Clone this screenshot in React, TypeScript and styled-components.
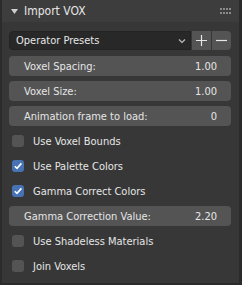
import styled, { createGlobalStyle } from "styled-components";

const GlobalStyle = createGlobalStyle`
  html, body {
    margin: 0;
    padding: 0;
    background: #2b2b2b;
  }
  body {
    font-family: "DejaVu Sans Condensed", "Liberation Sans", sans-serif;
    font-size: 11px;
    color: #e6e6e6;
  }
`;

const Page = styled.div`
  width: 242px;
  height: 285px;
  padding: 0 3px 0 2px;
  box-sizing: border-box;
  background: #2b2b2b;
`;

const Panel = styled.section`
  background: #373737;
  padding-bottom: 7px;
`;

const Header = styled.header`
  height: 22px;
  display: flex;
  align-items: center;
  background: #3d3d3d;
  padding: 0 8px 0 9px;
`;

const Title = styled.span`
  flex: 1;
  margin-left: 6px;
  font-size: 12px;
  color: #e6e6e6;
`;

const Body = styled.div`
  display: flex;
  flex-direction: column;
  gap: 5px;
  padding: 9px 8px 0 7px;
`;

const PresetRow = styled.div`
  display: flex;
  height: 19px;
  margin-bottom: 1px;
`;

const Dropdown = styled.div`
  flex: 1;
  display: flex;
  align-items: center;
  justify-content: space-between;
  background: #282828;
  border: 1px solid #232323;
  border-radius: 4px 0 0 4px;
  padding: 0 4px 0 6px;
`;

const IconButton = styled.div<{ $last?: boolean }>`
  width: 19px;
  display: flex;
  align-items: center;
  justify-content: center;
  background: #545454;
  margin-left: 1px;
  border-radius: ${(p) => (p.$last ? "0 4px 4px 0" : "0")};
`;

const Field = styled.div`
  height: 20px;
  display: flex;
  align-items: center;
  justify-content: space-between;
  background: #545454;
  border-radius: 4px;
  padding: 0 14px 0 15px;
`;

const CheckRow = styled.label`
  height: 20px;
  display: flex;
  align-items: center;
  gap: 9px;
  padding-left: 3px;
`;

const Box = styled.span<{ $on?: boolean }>`
  width: 12px;
  height: 12px;
  border-radius: 3px;
  background: ${(p) => (p.$on ? "#4772b3" : "#545454")};
  display: flex;
  align-items: center;
  justify-content: center;
`;

function Grip() {
  return (
    <svg width="11" height="6" viewBox="0 0 11 6">
      {[0, 3, 6, 9].map((x) =>
        [0, 4].map((y) => (
          <rect key={`${x}-${y}`} x={x} y={y} width="2" height="2" fill="#8a8a8a" />
        ))
      )}
    </svg>
  );
}

function Check() {
  return (
    <svg width="10" height="10" viewBox="0 0 10 10">
      <path d="M1.8 5.2 L4 7.4 L8.4 2.4" fill="none" stroke="#fff" strokeWidth="1.6" />
    </svg>
  );
}

function Checkbox({ label, on }: { label: string; on?: boolean }) {
  return (
    <CheckRow>
      <Box $on={on}>{on && <Check />}</Box>
      {label}
    </CheckRow>
  );
}

export default function App() {
  return (
    <Page>
      <GlobalStyle />
      <Panel>
        <Header>
          <svg width="7" height="7" viewBox="0 0 7 7">
            <path d="M0 1 L7 1 L3.5 6 Z" fill="#cfcfcf" />
          </svg>
          <Title>Import VOX</Title>
          <Grip />
        </Header>
        <Body>
          <PresetRow>
            <Dropdown>
              <span>Operator Presets</span>
              <svg width="8" height="6" viewBox="0 0 8 6">
                <path d="M1 1.5 L4 4.5 L7 1.5" fill="none" stroke="#bdbdbd" strokeWidth="1.2" />
              </svg>
            </Dropdown>
            <IconButton>
              <svg width="11" height="11" viewBox="0 0 11 11">
                <path d="M5.5 0 V11 M0 5.5 H11" stroke="#e6e6e6" strokeWidth="1.2" />
              </svg>
            </IconButton>
            <IconButton $last>
              <svg width="11" height="11" viewBox="0 0 11 11">
                <path d="M0 5.5 H11" stroke="#e6e6e6" strokeWidth="1.2" />
              </svg>
            </IconButton>
          </PresetRow>
          <Field>
            <span>Voxel Spacing:</span>
            <span>1.00</span>
          </Field>
          <Field>
            <span>Voxel Size:</span>
            <span>1.00</span>
          </Field>
          <Field>
            <span>Animation frame to load:</span>
            <span>0</span>
          </Field>
          <Checkbox label="Use Voxel Bounds" />
          <Checkbox label="Use Palette Colors" on />
          <Checkbox label="Gamma Correct Colors" on />
          <Field>
            <span>Gamma Correction Value:</span>
            <span>2.20</span>
          </Field>
          <Checkbox label="Use Shadeless Materials" />
          <Checkbox label="Join Voxels" />
        </Body>
      </Panel>
    </Page>
  );
}
